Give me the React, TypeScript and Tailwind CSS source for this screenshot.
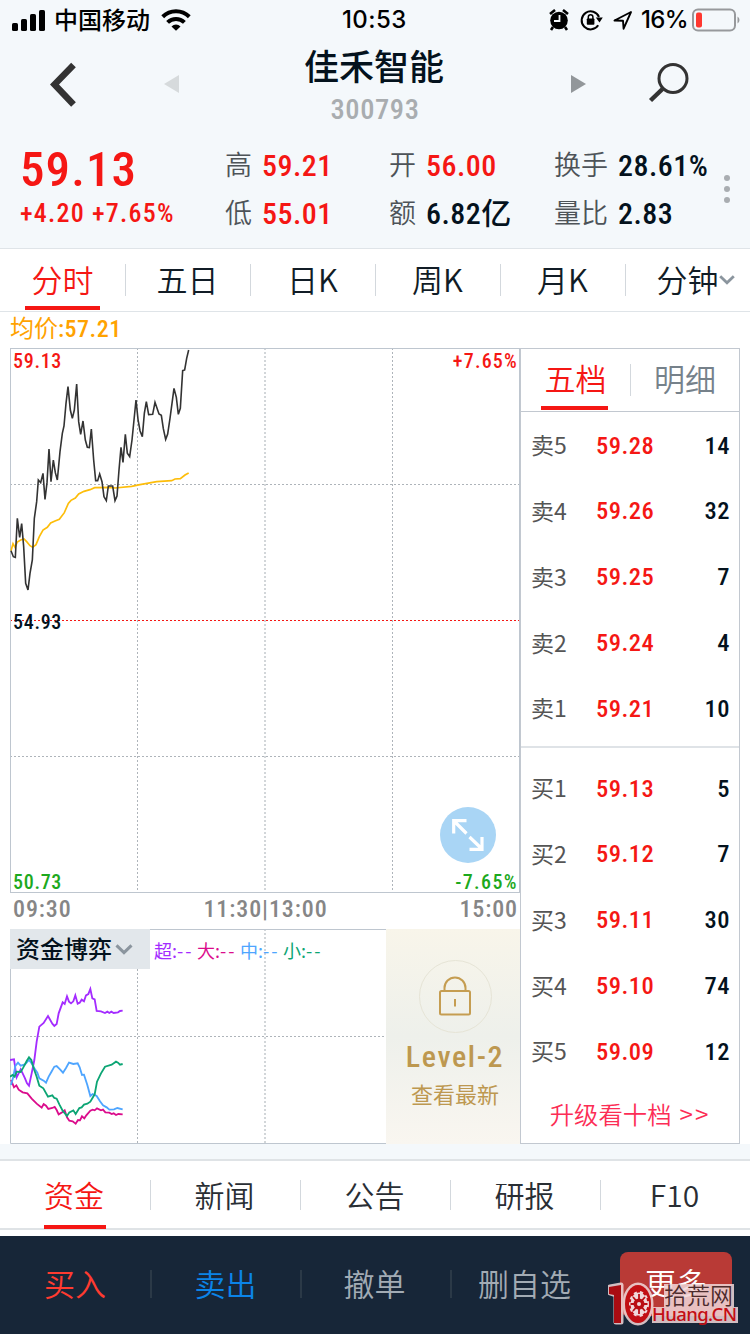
import React from 'react';
import clsx from 'clsx';

interface Level {
  label: string;
  price: string;
  volume: number;
}

const asks: Level[] = [
  { label: '卖5', price: '59.28', volume: 14 },
  { label: '卖4', price: '59.26', volume: 32 },
  { label: '卖3', price: '59.25', volume: 7 },
  { label: '卖2', price: '59.24', volume: 4 },
  { label: '卖1', price: '59.21', volume: 10 },
];

const bids: Level[] = [
  { label: '买1', price: '59.13', volume: 5 },
  { label: '买2', price: '59.12', volume: 7 },
  { label: '买3', price: '59.11', volume: 30 },
  { label: '买4', price: '59.10', volume: 74 },
  { label: '买5', price: '59.09', volume: 12 },
];

const periods = ['分时', '五日', '日K', '周K', '月K', '分钟'];
const infoTabs = ['资金', '新闻', '公告', '研报', 'F10'];

// chart series, in thirds of a pixel
const priceLine =
  '33,632 40,650 46,652 52,535 59,592 65,551 71,620 77,730 84,750 90,700 97,660 103,535 110,485 115,420 122,428 129,400 135,478 141,428 147,327 153,425 160,360 166,398 172,420 180,335 187,280 192,258 198,190 204,140 211,210 217,235 223,210 230,132 236,245 242,283 249,243 256,300 262,322 268,323 274,267 281,360 287,422 293,422 299,402 306,425 312,470 319,482 325,438 338,438 345,482 351,468 357,390 363,322 369,367 376,283 382,340 389,350 396,300 402,240 408,180 414,238 420,272 427,290 433,220 439,185 446,224 458,223 465,187 477,222 484,226 490,266 497,298 503,282 510,235 516,190 522,145 529,172 535,223 541,205 548,92 554,90 560,55 566,30';
const averageLine =
  '33,632 39,611 45,622 52,606 62,600 72,597 80,605 90,617 98,622 108,614 118,590 129,570 142,562 152,549 165,543 178,538 193,518 205,490 213,481 226,474 236,462 252,454 270,449 284,443 330,442 345,444 395,439 420,434 470,425 515,422 525,417 541,416 555,405 566,399';

const flows = [
  {
    name: '超',
    color: '#a42cff',
    textClass: 'text-[#a42cff]',
    points:
      '30,600 42,598 50,652 56,640 62,628 68,640 75,655 81,670 87,677 95,640 103,600 110,545 118,500 131,489 144,468 157,491 163,498 170,492 176,460 188,427 194,432 201,409 207,425 213,430 220,424 226,406 233,431 239,428 245,419 252,424 258,406 265,402 271,387 277,415 284,418 290,453 303,454 315,459 322,455 328,459 334,455 341,459 354,457 360,453 368,452',
  },
  {
    name: '大',
    color: '#db0c8c',
    textClass: 'text-[#db0c8c]',
    points:
      '33,660 42,682 49,676 56,689 68,697 82,700 95,716 110,731 125,743 131,732 138,737 145,747 157,744 164,741 170,750 176,763 188,756 194,751 201,772 208,782 218,784 227,791 234,780 240,781 246,769 253,775 259,766 271,752 278,749 284,751 291,745 303,751 309,749 316,757 328,758 335,762 341,760 348,765 355,762 368,763',
  },
  {
    name: '中',
    color: '#4ea5ff',
    textClass: 'text-[#4ea5ff]',
    points:
      '33,675 40,650 46,618 54,608 62,617 75,613 87,600 95,610 103,625 112,638 118,655 131,662 138,668 146,650 154,636 163,620 170,618 180,628 189,638 198,624 207,608 220,612 233,610 239,622 246,645 252,644 262,675 271,708 278,702 290,708 300,724 309,736 320,742 328,749 342,748 352,744 368,748',
  },
  {
    name: '小',
    color: '#0ca574',
    textClass: 'text-[#0ca574]',
    points:
      '30,650 38,645 44,650 50,635 62,636 70,622 80,603 87,592 94,600 102,628 110,650 118,677 130,685 144,710 157,706 163,714 170,716 178,733 188,752 201,768 208,757 220,751 227,762 238,744 245,742 252,734 262,731 271,725 284,703 291,665 303,640 315,620 335,614 348,605 354,608 360,614 368,612',
  },
];

const num = "font-['Roboto_Condensed','Roboto','Noto_Sans_CJK_SC',sans-serif] font-medium [font-stretch:condensed]";

const Chevron: React.FC<{ className?: string }> = ({ className }) => (
  <svg viewBox="0 0 16 10" className={className} fill="none" stroke="#8b959e" strokeWidth="2.8">
    <path d="M1.2 1.2 8 7.8l6.8-6.6" />
  </svg>
);

const StatusBar = () => (
  <div className="relative flex h-10 items-center justify-between pl-3 pr-[9px] text-black">
    <div className="flex items-center">
      <svg width="34" height="22" viewBox="0 0 34 22">
        <rect x="0" y="14" width="6" height="8" rx="1.6" />
        <rect x="9" y="10" width="6" height="12" rx="1.6" />
        <rect x="18" y="5" width="6" height="17" rx="1.6" />
        <rect x="27" y="1" width="6" height="21" rx="1.6" />
      </svg>
      <span className="ml-2 pb-[3px] text-2xl font-medium leading-[37px]">中国移动</span>
      <svg width="30" height="22" viewBox="0 0 30 22" className="ml-[11px]">
        <g fill="none" stroke="#000" strokeWidth="4">
          <path d="M1.7 7.8a19 19 0 0 1 26.6 0" />
          <path d="M6.6 13.4a12 12 0 0 1 16.8 0" />
        </g>
        <path d="M10.5 17.4a6.5 6.5 0 0 1 9 0L15 21.8Z" />
      </svg>
    </div>
    <span className="absolute left-[342px] font-['Inter',sans-serif] text-[24px] font-medium tracking-[0.4px]">10:53</span>
    <div className="flex items-center">
      <svg width="20" height="22" viewBox="0 0 20 22">
        <circle cx="10" cy="11.5" r="8.8" />
        <path d="M1 5 6 1M14 1l5 4M4 18l-2 3M16 18l2 3" stroke="#000" strokeWidth="2.6" />
        <path d="M10.5 6v6H5" fill="none" stroke="#f4f8fb" strokeWidth="1.8" />
      </svg>
      <svg width="24" height="22" viewBox="0 0 24 22" className="ml-[11px]">
        <path d="M18.2 16.3A9 9 0 1 1 19 8" fill="none" stroke="#000" strokeWidth="2" />
        <path d="M15.8 8.6h7L19.5 13.5Z" />
        <rect x="6.8" y="9.5" width="7.6" height="6.2" rx="0.8" />
        <path d="M8.3 10V8a2.3 2.3 0 0 1 4.6 0v2" fill="none" stroke="#000" strokeWidth="1.5" />
      </svg>
      <svg width="20" height="20" viewBox="0 0 20 20" className="ml-[9px]" fill="none" stroke="#000" strokeWidth="1.9" strokeLinejoin="round">
        <path d="M18 2 1.500 10.500l8.500.2.6 8Z" />
      </svg>
      <span className="ml-2 font-['Inter',sans-serif] text-[24px] font-medium tracking-[-0.6px]">16%</span>
      <svg width="49" height="24" viewBox="0 0 49 24" className="ml-[4px]">
        <rect x="1" y="1.5" width="42" height="21" rx="5" fill="none" stroke="#97999c" strokeWidth="2" />
        <rect x="4" y="4.5" width="6" height="15" rx="2" fill="#ff3830" />
        <path d="M45.5 8.500v7q2-1 2-3.500t-2-3.500" fill="#97999c" />
      </svg>
    </div>
  </div>
);

const TitleBar = () => (
  <div className="flex h-[90px] items-start">
    <svg width="28" height="46" viewBox="0 0 28 46" className="ml-[50px] mt-[22px]" fill="none" stroke="#333" strokeWidth="6.5">
      <path d="M23.500 3 4.500 22.500l19 20" />
    </svg>
    <svg width="16" height="20" viewBox="0 0 16 20" className="ml-[86px] mt-[34px]" fill="#d6dadc">
      <path d="M0 10 15 1v18Z" />
    </svg>
    <div className="ml-[93px] flex w-[202px] flex-col items-center">
      <h1 className="pt-1 text-[35px] font-medium leading-[42px] text-[#04121d]">佳禾智能</h1>
      <span className={clsx(num, 'pl-0.5 pt-[3px] text-[28.5px] leading-[42px] tracking-[0.6px] text-[#a9adb0]')}>300793</span>
    </div>
    <svg width="16" height="20" viewBox="0 0 16 20" className="ml-24 mt-[34px]" fill="#92979a">
      <path d="M0 1v18l15-9Z" />
    </svg>
    <svg width="42" height="42" viewBox="0 0 42 42" className="ml-[61px] mt-[22px]" fill="none" stroke="#333">
      <circle cx="25" cy="16.5" r="14" strokeWidth="3" />
      <path d="M14.500 27 2.500 38.500" strokeWidth="4.5" />
    </svg>
  </div>
);

interface StatProps {
  label: string;
  value: string;
  up?: boolean;
}

const Stat: React.FC<StatProps> = ({ label, value, up = false }) => (
  <div className="flex h-12 items-center whitespace-nowrap">
    <span className="pb-[3px] text-[27px] font-[350] leading-[45px] text-[#4d5358]">{label}</span>
    <span className={clsx(num, 'ml-2.5 pt-px text-[30px] leading-[45px] tracking-[0.5px]', up ? 'text-[#f51714]' : 'text-[#04121d]')}>
      {value}
    </span>
  </div>
);

const Quote = () => (
  <div className="flex h-[118px] pl-5 pt-[11px]">
    <div className={clsx(num, 'w-[205px] text-[#f51714]')}>
      <div className="h-14 text-[49px] leading-[57px] tracking-[1.1px]">59.13</div>
      <div className="text-[26px] leading-[32px] tracking-[1.2px]">+4.20 +7.65%</div>
    </div>
    <div className="w-[164px]">
      <Stat label="高" value="59.21" up />
      <Stat label="低" value="55.01" up />
    </div>
    <div className="w-[165px]">
      <Stat label="开" value="56.00" up />
      <Stat label="额" value="6.82亿" />
    </div>
    <div className="w-[170px]">
      <Stat label="换手" value="28.61%" />
      <Stat label="量比" value="2.83" />
    </div>
    <div className="mt-[34px] flex flex-col gap-[5px]">
      <i className="size-1.5 rounded-full bg-[#a9adb1]" />
      <i className="size-1.5 rounded-full bg-[#a9adb1]" />
      <i className="size-1.5 rounded-full bg-[#a9adb1]" />
    </div>
  </div>
);

const PeriodTabs = () => (
  <nav className="flex h-16 border-y border-[#dfe4e8] bg-white">
    {periods.map((name, i) => (
      <div key={name} className="flex w-[125px] items-center">
        {i > 0 && <i className="h-8 w-px bg-[#d3d8dd]" />}
        <div
          className={clsx(
            'relative flex h-full flex-1 items-center justify-center pb-0.5 text-[31px] font-[350]',
            i === 0 ? 'text-[#f51714]' : 'text-[#111c26]',
            i === 5 && 'pl-[15px]',
            i > 0 && i < 5 && 'pr-px',
          )}
        >
          {name}
          {i === 5 && <Chevron className="mt-0.5 h-2.5 w-4" />}
          {i === 0 && <i className="absolute bottom-px left-[25px] h-1 w-[75px] bg-[#f51714]" />}
        </div>
      </div>
    ))}
  </nav>
);

const PriceChart = () => (
  <div className={clsx(num, 'relative h-[545px] text-xl leading-6 tracking-[0.7px]')}>
    <svg width="510" height="545" viewBox="30 24 1530 1635" fill="none">
      <g stroke="#aeb4ba" strokeWidth="3" strokeDasharray="6 6">
        <path d="M412.500 24v1635M1177.500 24v1635M30 433.500h1530M30 1249.500h1530" />
        <path d="M795 24v1635" stroke="#d2d6d9" strokeWidth="6" />
        <path d="M30 841.500h1530" stroke="#f51714" />
      </g>
      <rect x="31.5" y="25.5" width="1527" height="1632" stroke="#bec6cf" strokeWidth="3" />
      <polyline points={averageLine} stroke="#fdbd0a" strokeWidth="5" />
      <polyline points={priceLine} stroke="#333" strokeWidth="4.8" />
    </svg>
    <span className="absolute left-[3px] top-px text-[#f51714]">59.13</span>
    <span className="absolute right-0.5 top-px tracking-[1.2px] text-[#f51714]">+7.65%</span>
    <span className="absolute left-[3px] top-[262px] text-[#04121d]">54.93</span>
    <span className="absolute -bottom-px left-[3px] text-[#1da91d]">50.73</span>
    <span className="absolute -bottom-px right-0.5 tracking-[1.4px] text-[#1da91d]">-7.65%</span>
    <button className="absolute right-6 top-[459px] size-14 rounded-full bg-[#a9d5f5]">
      <svg width="56" height="56" viewBox="0 0 56 56" fill="none" stroke="#fff" strokeWidth="3.2">
        <path d="M13.7 26.500V13.700h12.800M14 14l12.500 12.500M29.500 30 42 42M42 30v12.300H29.500" />
      </svg>
    </button>
  </div>
);

const FlowChart = () => (
  <div className="relative h-[215px] w-[376px]">
    <svg width="376" height="215" viewBox="30 207 1128 645" fill="none">
      <g stroke="#aeb4ba" strokeWidth="3" strokeDasharray="6 6">
        <path d="M412.500 207v645M30 529.500h1128" />
        <path d="M795 207v645" stroke="#d2d6d9" strokeWidth="6" />
      </g>
      <path d="M1158 208.500H31.500v642H1158" stroke="#bec6cf" strokeWidth="3" />
      {flows.map((flow) => (
        <polyline key={flow.name} points={flow.points} stroke={flow.color} strokeWidth="5.5" />
      ))}
    </svg>
    <div className="absolute left-0 top-0 flex items-center">
      <button className="flex h-10 w-[140px] items-center bg-[#e2e7eb] pb-0.5 pl-1.5 text-2xl font-medium text-[#04121d]">
        资金博弈
        <Chevron className="ml-[3px] mt-0.5 h-[11px] w-[18px]" />
      </button>
      <div className="ml-1 flex pt-[3px] text-[18px]">
        {flows.map((flow) => (
          <span key={flow.name} className={clsx('w-[43px] whitespace-nowrap', flow.textClass)}>
            {flow.name}:<span className="tracking-[2px]">--</span>
          </span>
        ))}
      </div>
    </div>
  </div>
);

const LevelTwo = () => (
  <div className="flex h-[215px] w-[134px] flex-col items-center bg-gradient-to-b from-[#f8f5ea] via-[#eef0eb] to-[#f9f6f0] pl-1 text-[#bd9850]">
    <div className="mt-[31px] flex size-[73px] items-center justify-center rounded-full border border-[#e6e4d6]">
      <svg width="32" height="40" viewBox="0 0 32 40" fill="none" stroke="#c59d51" strokeWidth="2" className="-mt-0.5">
        <rect x="1" y="15" width="30" height="23.5" rx="1.5" />
        <path d="M5.500 15v-3a10.500 10.500 0 0 1 21 0v3M16 23v7.500" />
      </svg>
    </div>
    <span className={clsx(num, 'mt-1.5 text-[30px] leading-9 tracking-[1.6px]')}>Level-2</span>
    <span className="mt-0.5 text-[22px] leading-8">查看最新</span>
  </div>
);

const Row: React.FC<{ level: Level }> = ({ level }) => (
  <div className="flex h-[65.8px] items-center pl-2.5 pr-[9px]">
    <span className="w-[65px] pb-[3px] text-[23px] text-[#555]">{level.label}</span>
    <span className={clsx(num, 'text-[24.5px] tracking-[0.5px] text-[#f51714]')}>{level.price}</span>
    <span className={clsx(num, 'ml-auto text-[24.5px] tracking-[0.5px] text-[#04121d]')}>{level.volume}</span>
  </div>
);

const OrderBook = () => (
  <aside className="flex h-[796px] w-[220px] flex-col border border-[#c2c8d0]">
    <div className="flex h-[63px] items-center border-b border-[#c2c8d0] text-[31px] font-[350]">
      <div className="relative flex h-full w-[109px] items-center justify-center pb-[3px] text-[#f51714]">
        五档
        <i className="absolute bottom-px left-5 h-1 w-[67px] bg-[#f51714]" />
      </div>
      <i className="h-8 w-px bg-[#d3d8dd]" />
      <div className="flex-1 pb-[3px] text-center text-[#76818a]">明细</div>
    </div>
    <div className="h-[336px] border-b-2 border-[#dfe3e7] pt-px">
      {asks.map((level) => (
        <Row key={level.label} level={level} />
      ))}
    </div>
    <div className="h-[337px] pt-2">
      {bids.map((level) => (
        <Row key={level.label} level={level} />
      ))}
    </div>
    <div className="flex h-[58px] items-center justify-center gap-2 text-[24.4px] font-[350] text-[#fc2d55]">
      升级看十档<span className="tracking-[2px]">&gt;&gt;</span>
    </div>
  </aside>
);

const InfoTabs = () => (
  <nav className="flex h-[71px] border-y-2 border-[#dfe3e6] bg-white">
    {infoTabs.map((name, i) => (
      <div key={name} className="flex w-[150px] items-center">
        {i > 0 && <i className="h-[30px] w-px bg-[#d3d8dd]" />}
        <div
          className={clsx(
            'relative flex h-full flex-1 items-center justify-center pr-0.5 text-[30px] font-[350]',
            i === 0 ? 'text-[#f51714]' : 'text-[#292e34]',
          )}
        >
          {name}
          {i === 0 && <i className="absolute -bottom-px left-11 h-1 w-[62px] bg-[#f51714]" />}
        </div>
      </div>
    ))}
  </nav>
);

const Watermark = () => (
  <svg width="142" height="56" viewBox="0 0 142 56" className="absolute bottom-0 right-0">
    <g stroke="#f0d6d8" strokeWidth="5" strokeLinejoin="round" fill="#f0d6d8" opacity="0.86">
      <path d="M2 9 13 7v37H8V17l-6-2Z" />
      <ellipse cx="30" cy="26" rx="13" ry="19" />
      <path d="M56 6h70v23H56ZM44 29h86v16H44Z" stroke="none" />
    </g>
    <path d="M1 9 13 7v38H6V17l-5-1Z" fill="#a90c12" />
    <ellipse cx="30" cy="26" rx="13" ry="19" fill="#c20f14" />
    <ellipse cx="31" cy="26" rx="8.5" ry="11.5" fill="#f0d8da" stroke="#f0d8da" strokeWidth="3" strokeDasharray="3 3" />
    <circle cx="31" cy="26" r="5.5" fill="#b90e13" />
    <path d="M31 16v20M22.500 26h17M25 19l12 14M37 19 25 33" stroke="#b90e13" strokeWidth="1.8" />
    <circle cx="31" cy="26" r="2" fill="#f0d8da" />
    <text x="56" y="26" fontSize="23" fill="#4c2b2c" fontFamily="'Noto Sans CJK SC', sans-serif">拾荒网</text>
    <text x="44" y="43" fontSize="18.5" fill="#c40e14" textLength="85" fontFamily="'Noto Sans', sans-serif" fontWeight="500">Huang.CN</text>
  </svg>
);

const ActionBar = () => (
  <footer className="relative flex h-[98px] items-center bg-[#172638] pb-0.5 text-[31px] font-[350] text-[#a2abb4]">
    <button className="w-[150px] pb-0.5 text-[#ff3b30]">买入</button>
    <i className="h-7 w-0.5 bg-[#2b3947]" />
    <button className="w-[147px] pb-0.5 text-[#0b84e8]">卖出</button>
    <i className="ml-px h-7 w-0.5 bg-[#2b3947]" />
    <button className="w-[145px] pb-0.5">撤单</button>
    <i className="ml-[3px] h-7 w-0.5 bg-[#2b3947]" />
    <button className="w-[145px] pb-0.5">删自选</button>
    <button className="ml-[23px] h-16 w-28 rounded-lg bg-[#b93a36] pb-1 text-white">更多</button>
    <Watermark />
  </footer>
);

const App: React.FC = () => {
  return (
    <div className="h-[1334px] w-[750px] overflow-hidden bg-[#f4f8fb] font-['Noto_Sans_CJK_SC',sans-serif]">
      <StatusBar />
      <TitleBar />
      <Quote />
      <PeriodTabs />
      <main className="h-[832px] bg-white px-2.5">
        <div className={clsx(num, 'h-9 text-2xl leading-[34px] tracking-[0.5px] text-[#ffa200]')}>
          <span className="font-normal tracking-normal">均价</span>:57.21
        </div>
        <div className="flex">
          <div className="w-[510px]">
            <PriceChart />
            <div className={clsx(num, 'flex h-9 justify-between pl-[3px] pr-0.5 text-2xl leading-8 tracking-[0.9px] text-[#868686]')}>
              <span>09:30</span>
              <span>11:30|13:00</span>
              <span>15:00</span>
            </div>
            <div className="flex">
              <FlowChart />
              <LevelTwo />
            </div>
          </div>
          <OrderBook />
        </div>
      </main>
      <div className="h-[15px]" />
      <InfoTabs />
      <div className="h-1.5 bg-white" />
      <ActionBar />
    </div>
  );
};

export default App;
